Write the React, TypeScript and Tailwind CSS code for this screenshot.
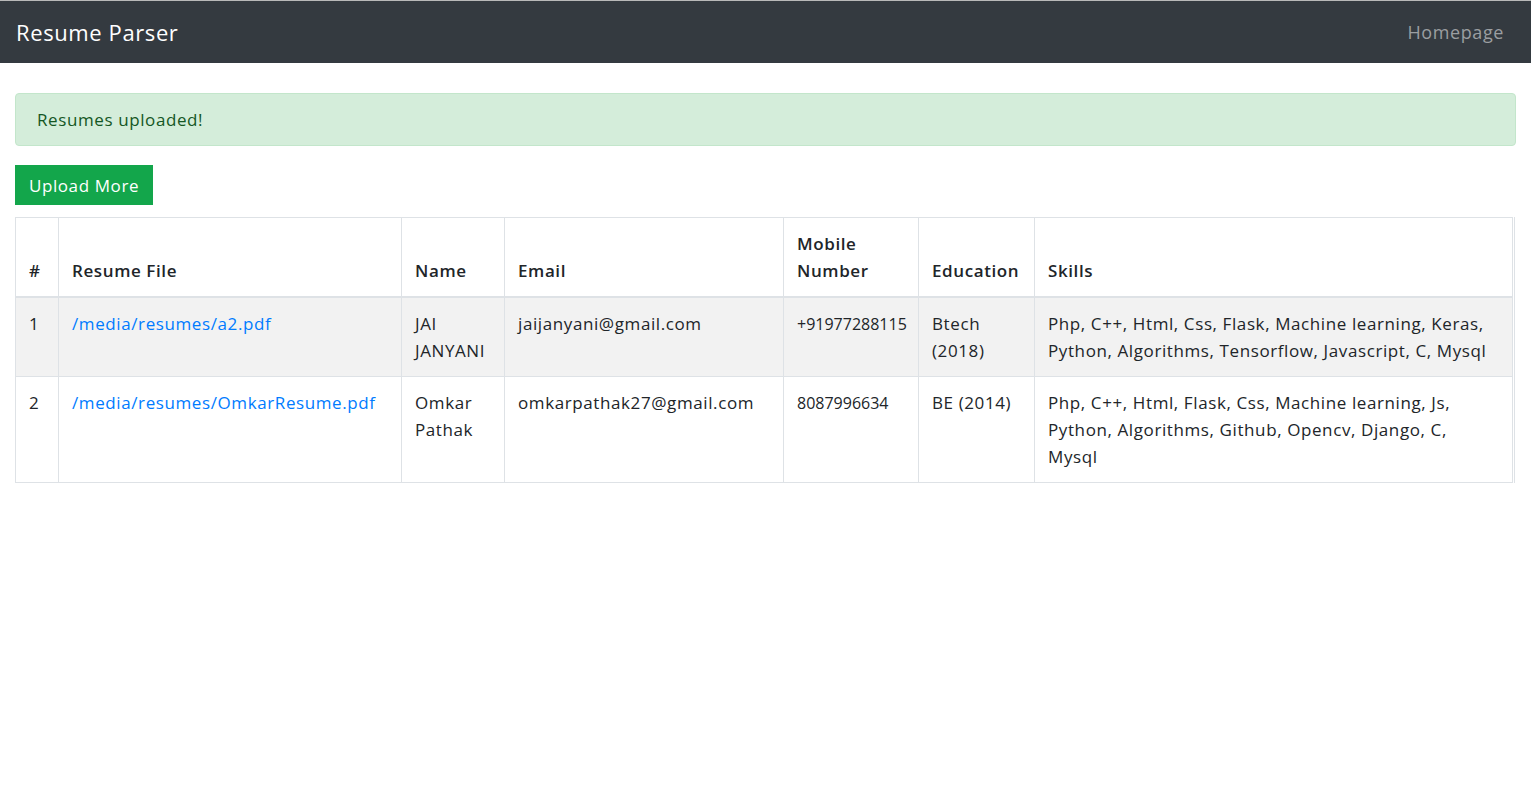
import React from "react";

const rows = [
  {
    id: 1,
    file: "/media/resumes/a2.pdf",
    name: ["JAI", "JANYANI"],
    email: "jaijanyani@gmail.com",
    mobile: "+91977288115",
    education: ["Btech", "(2018)"],
    skills: [
      "Php, C++, Html, Css, Flask, Machine learning, Keras,",
      "Python, Algorithms, Tensorflow, Javascript, C, Mysql",
    ],
  },
  {
    id: 2,
    file: "/media/resumes/OmkarResume.pdf",
    name: ["Omkar", "Pathak"],
    email: "omkarpathak27@gmail.com",
    mobile: "8087996634",
    education: ["BE (2014)"],
    skills: [
      "Php, C++, Html, Flask, Css, Machine learning, Js,",
      "Python, Algorithms, Github, Opencv, Django, C,",
      "Mysql",
    ],
  },
];

function Lines({ lines }: { lines: string[] }) {
  return (
    <>
      {lines.map((l, i) => (
        <React.Fragment key={i}>
          {i > 0 && <br />}
          {l}
        </React.Fragment>
      ))}
    </>
  );
}

export default function App() {
  const th = "border border-[#dee2e6] border-b-2 px-[13px] py-3 text-left align-bottom font-semibold";
  const td = "border border-[#dee2e6] px-[13px] py-3 align-top";

  return (
    <div className="min-h-screen bg-white font-['Open_Sans',sans-serif] text-[17px] leading-[27px] tracking-[0.6px] text-[#212529]">
      {/* Navbar */}
      <nav className="flex h-[63px] items-center justify-between border-t border-[#b9b9b9] bg-[#343a40] pl-4 pr-[27px]">
        <span className="text-[22px] text-white">Resume Parser</span>
        <a className="text-[18px] text-[#9b9ea1]">Homepage</a>
      </nav>

      <main className="px-[15px] pt-[30px]">
        {/* Alert */}
        <div className="rounded border border-[#c3e6cb] bg-[#d4edda] px-[21px] py-[12px] text-[#155724]">
          Resumes uploaded!
        </div>

        <button className="mt-[19px] flex h-10 w-[138px] items-center justify-center bg-[#13a64b] text-white">
          Upload More
        </button>

        {/* Results */}
        <div className="mt-3 w-[1500px] border-r border-[#dee2e6]">
          <table className="w-[1498px] table-fixed border-collapse border border-[#dee2e6]">
            <colgroup>
              <col className="w-[43px]" />
              <col className="w-[343px]" />
              <col className="w-[103px]" />
              <col className="w-[279px]" />
              <col className="w-[135px]" />
              <col className="w-[116px]" />
              <col />
            </colgroup>
            <thead>
              <tr>
                <th className={th}>#</th>
                <th className={th}>Resume File</th>
                <th className={th}>Name</th>
                <th className={th}>Email</th>
                <th className={th}>
                  Mobile
                  <br />
                  Number
                </th>
                <th className={th}>Education</th>
                <th className={th}>Skills</th>
              </tr>
            </thead>
            <tbody>
              {rows.map((r, i) => (
                <tr key={r.id} className={i % 2 === 0 ? "bg-[#f2f2f2]" : "bg-white"}>
                  <td className={td}>{r.id}</td>
                  <td className={td}>
                    <a className="text-[#007bff]">{r.file}</a>
                  </td>
                  <td className={td}>
                    <Lines lines={r.name} />
                  </td>
                  <td className={td}>{r.email}</td>
                  <td className={`${td} pt-[13px] text-[16px] tracking-normal`}>{r.mobile}</td>
                  <td className={td}>
                    <Lines lines={r.education} />
                  </td>
                  <td className={td}>
                    <Lines lines={r.skills} />
                  </td>
                </tr>
              ))}
            </tbody>
          </table>
        </div>
      </main>
    </div>
  );
}
